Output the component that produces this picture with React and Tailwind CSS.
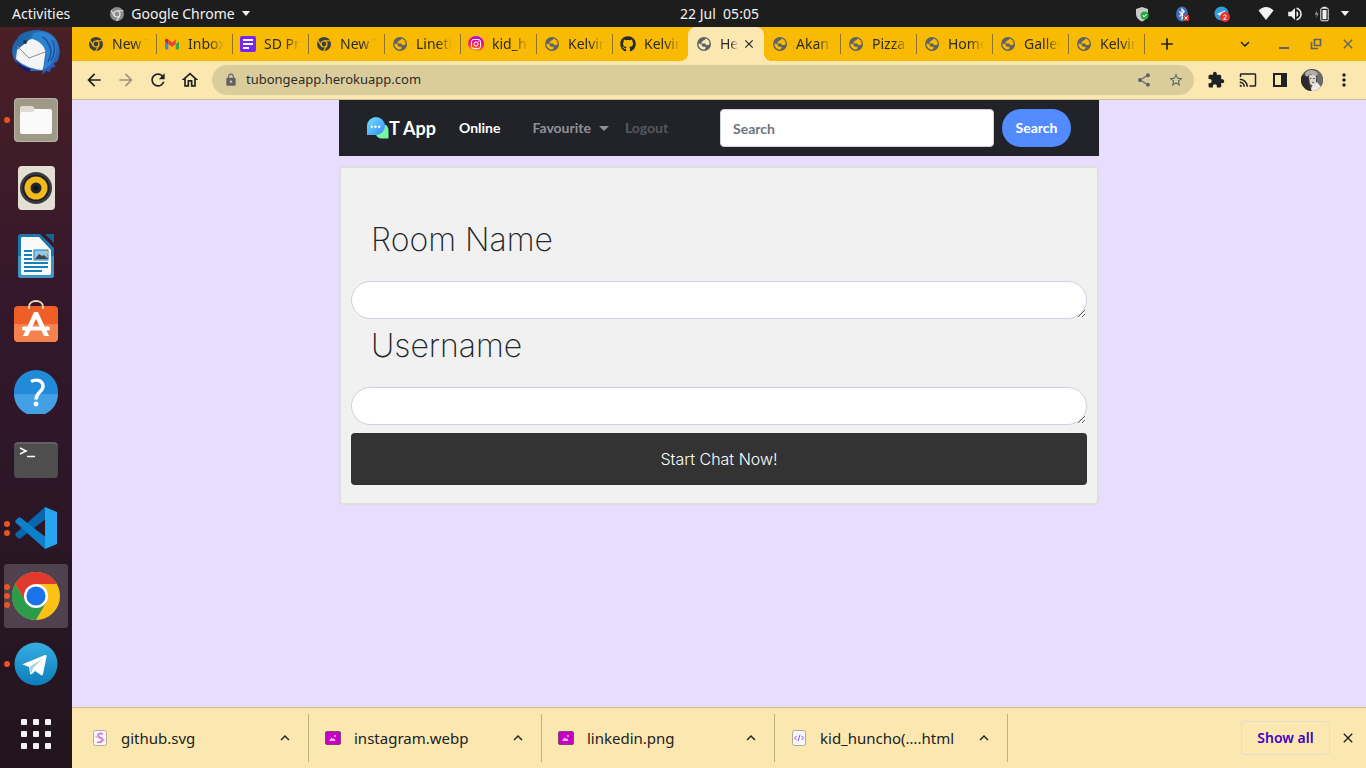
import React from "react";
import {
  MdArrowBack,
  MdArrowForward,
  MdRefresh,
  MdOutlineHome,
  MdLock,
  MdShare,
  MdStarBorder,
  MdExtension,
  MdCast,
  MdAdd,
  MdClose,
  MdMoreVert,
  MdVolumeUp,
  MdKeyboardArrowDown,
  MdKeyboardArrowUp,
} from "react-icons/md";
import { FaGithub } from "react-icons/fa";

/* ---------- favicons ---------- */

function Globe() {
  return (
    <svg viewBox="0 0 16 16" className="size-4 shrink-0" aria-hidden="true">
      <circle cx="8" cy="8" r="7" fill="#5f6368" />
      <path
        fill="currentColor"
        d="M9.500 2.600c-.2 1.300-1 1.800-2.200 1.900-.8.100-.6 1.300-1.400 1.700-.7.300-.8 1-.2 1.300H8.500c1 0 1.300.7 1.500 1.500h2.800l.8-1.500C13.500 5.200 12 3.300 9.500 2.600zM2.400 7.800c0 2.900 1.900 5 4.600 5.700 1.600.2 2.300-.3 2.200-1.300 0-.8.5-1 .9-1.500H7.500C6.300 10.700 6 10 5.900 9.200 5.700 8.300 4.500 7.800 2.400 7.800z"
      />
    </svg>
  );
}

function ChromeMono({ disc = "#3c4043", line = "#f9bb02" }) {
  return (
    <svg viewBox="0 0 16 16" className="size-4 shrink-0" aria-hidden="true">
      <circle cx="8" cy="8" r="7" fill={disc} />
      <circle cx="8" cy="8" r="3.600" fill={line} />
      <circle cx="8" cy="8" r="2.400" fill={disc} />
      <path d="M8 4.800h6.400M5.200 9.600L2 4.200M10.800 9.600L7.600 15" stroke={line} strokeWidth="1.100" />
    </svg>
  );
}

function Gmail() {
  return (
    <svg viewBox="0 0 16 16" className="size-4 shrink-0" aria-hidden="true">
      <path d="M1 4v8.500c0 .5.400 1 1 1h2.300V7z" fill="#4285f4" />
      <path d="M15 4v8.500c0 .5-.4 1-1 1h-2.300V7z" fill="#34a853" />
      <path d="M11.700 3.600V8L15 5.500V4.200c0-1.400-1.500-2-2.500-1.200z" fill="#fbbc04" />
      <path d="M1 5.500L4.300 8V3.600L3.500 3C2.500 2.200 1 2.800 1 4.200z" fill="#c5221f" />
      <path d="M4.300 3.600L8 6.400l3.700-2.800V8L8 10.700 4.300 8z" fill="#ea4335" />
    </svg>
  );
}

function Forms() {
  return (
    <svg viewBox="0 0 16 16" className="size-4 shrink-0" aria-hidden="true">
      <rect width="16" height="16" rx="2" fill="#7627f5" />
      <path d="M3 4h10M3 8h10M3 12h6" stroke="#fff" strokeWidth="1.800" />
    </svg>
  );
}

function Instagram() {
  return (
    <svg viewBox="0 0 16 16" className="size-4 shrink-0" aria-hidden="true">
      <defs>
        <linearGradient id="ig" x1=".4" y1="1" x2=".6" y2="0">
          <stop offset="0" stopColor="#ffd400" />
          <stop offset=".35" stopColor="#ff3a3a" />
          <stop offset=".65" stopColor="#f2078d" />
          <stop offset="1" stopColor="#a010f0" />
        </linearGradient>
      </defs>
      <circle cx="8" cy="8" r="8" fill="url(#ig)" />
      <rect x="3.500" y="3.500" width="9" height="9" rx="2.200" fill="none" stroke="#fff" />
      <circle cx="8" cy="8" r="2.100" fill="none" stroke="#fff" />
      <circle cx="10.700" cy="5.400" r=".6" fill="#fff" />
    </svg>
  );
}

const tabs = [
  { title: "New Tab", icon: <ChromeMono /> },
  { title: "Inbox (1)", icon: <Gmail /> },
  { title: "SD Prep", icon: <Forms /> },
  { title: "New Tab", icon: <ChromeMono /> },
  { title: "Lineth", icon: <Globe /> },
  { title: "kid_hun", icon: <Instagram /> },
  { title: "Kelvin", icon: <Globe /> },
  { title: "Kelvin", icon: <FaGithub className="size-4 shrink-0 text-[#24292f]" /> },
  { title: "Hello", icon: <Globe />, active: true },
  { title: "Akan N", icon: <Globe /> },
  { title: "Pizza P", icon: <Globe /> },
  { title: "Home", icon: <Globe /> },
  { title: "Gallery", icon: <Globe /> },
  { title: "Kelvin", icon: <Globe /> },
];

/* ---------- system bar ---------- */

function SystemBar() {
  return (
    <header className="grid h-[27px] shrink-0 grid-cols-[1fr_auto_1fr] items-center bg-[#1d1d1d] text-sm text-[#f2f2f2]">
      <div className="flex items-center pl-3">
        <button>Activities</button>
        <button className="ml-[39px] flex items-center">
          <ChromeMono disc="#8c8c8c" line="#e4e4e4" />
          <span className="ml-1.5">Google Chrome</span>
          <svg viewBox="0 0 10 6" className="ml-1.5 h-[5px] w-2.5" aria-hidden="true">
            <path d="M0 0h10L5 6z" fill="#f2f2f2" />
          </svg>
        </button>
      </div>
      <time className="pl-[73px] whitespace-pre">22 Jul  05:05</time>
      <div className="flex items-center justify-end pr-4">
        <svg viewBox="0 0 16 16" className="size-4" aria-label="Shield">
          <path d="M8 1l6 2v4.500c0 4-2.500 6.500-6 8-3.500-1.500-6-4-6-8V3z" fill="#c9cbc9" />
          <circle cx="10.600" cy="9.400" r="4" fill="#1eab42" />
          <path d="M8.800 9.400l1.300 1.400 2.400-2.500" stroke="#fff" strokeWidth="1.100" fill="none" />
        </svg>
        <svg viewBox="0 0 16 16" className="ml-6 size-4" aria-label="Bluetooth">
          <ellipse cx="8" cy="8" rx="6" ry="7.500" fill="#3d6fb5" />
          <path d="M5.300 5.500l5 5L8 13V3l2.300 2.500-5 5" stroke="#e9eef7" strokeWidth="1.200" fill="none" />
          <rect x="9" y="9" width="6" height="6" rx="1" fill="#e2322f" />
          <path d="M10.500 10.500l3 3m0-3l-3 3" stroke="#fff" />
        </svg>
        <svg viewBox="0 0 16 16" className="ml-6 size-4" aria-label="Telegram">
          <circle cx="7.500" cy="7.500" r="7" fill="#2b9fd9" />
          <path d="M3 8l8-3.500-1.500 7z" fill="#fff" />
          <circle cx="11" cy="11" r="5" fill="#e7332f" />
          <path d="M9.400 9.700c.4-1.300 3-1.100 2.700.5-.2.900-1.500 1.700-2.600 3h3.100" stroke="#fff" fill="none" />
        </svg>
        <svg viewBox="0 0 16 16" className="ml-7 size-4" aria-label="Wireless">
          <path d="M.5 4.500C5-.2 11-.2 15.500 4.500L8 14z" fill="#f2f2f2" />
        </svg>
        <MdVolumeUp className="ml-3 size-[18px]" />
        <svg viewBox="0 0 16 16" className="ml-2.5 size-4" aria-label="Battery">
          <path d="M3 4L1 8.500h2L2 12l2.500-4.500h-2z" fill="#bdbdbd" />
          <rect x="6.800" y="2.200" width="7.400" height="12.600" rx="1" fill="none" stroke="#f2f2f2" />
          <rect x="8.500" y="4" width="4" height="9.200" fill="#f2f2f2" />
          <path d="M8.500.8h4v1.400h-4z" fill="#f2f2f2" />
        </svg>
        <svg viewBox="0 0 10 6" className="ml-2.5 h-[5px] w-2.5" aria-hidden="true">
          <path d="M0 0h10L5 6z" fill="#f2f2f2" />
        </svg>
      </div>
    </header>
  );
}

/* ---------- dock ---------- */

const Thunderbird = () => (
  <svg viewBox="0 0 48 48" className="size-12" aria-hidden="true">
    <defs>
      <linearGradient id="tb" x1="0" y1="0" x2="1" y2="1">
        <stop offset="0" stopColor="#1b4f8e" />
        <stop offset=".5" stopColor="#2b7fd0" />
        <stop offset="1" stopColor="#2a4ba8" />
      </linearGradient>
    </defs>
    <path d="M17 3C27 0 40 3 45 13c4 9 3 16 0 21l-3 1 1 4-4 1-1 4-4-1-4 4 1-4H17C8 40 0 32 0 23c0-5 2-9 5-12 2-5 7-7 12-8z" fill="url(#tb)" />
    <path d="M5 22l11-10c8-3 14 1 18 8l-3 22c-8 0-20-4-27-11z" fill="#f4f4f4" />
    <path d="M5 18l12 12 16-6" fill="none" stroke="#8c9096" strokeWidth="1" />
    <path d="M4 32c4 5 9 7 15 9l-2 4C12 43 6 39 4 32z" fill="#251862" />
    <path d="M17 10c3-5 8-7 14-6 10 3 14 10 13 21-1 7-5 13-14 17 5-9 5-18 1-24-4-5-9-7-14-8z" fill="#2d83cf" />
    <path d="M35 14c5 5 5 12 1 20M40 12c4 7 3 14-1 21M30 9c5 2 7 6 8 11" stroke="#1d559e" strokeWidth="1.500" fill="none" />
    <path d="M8 15c1-6 7-9 13-8l-5 6-9 7z" fill="#1f65a8" />
    <circle cx="13" cy="14" r="2" fill="#17395f" />
  </svg>
);

const Files = () => (
  <svg viewBox="0 0 44 44" className="size-11" aria-hidden="true">
    <rect width="44" height="44" rx="4" fill="#9f9987" />
    <rect x=".5" y=".5" width="43" height="43" rx="4" fill="none" stroke="#b9b5a6" />
    <path d="M6 10c0-1 1-2 2-2h10c2 0 2 3 4 3v6H6z" fill="#dedbd0" />
    <path d="M6 16c0-1 1-2 2-2h10c2 0 2-3 4-3h14c1 0 2 1 2 2v21c0 1-1 2-2 2H8c-1 0-2-1-2-2z" fill="#fafafa" />
  </svg>
);

const Rhythmbox = () => (
  <svg viewBox="0 0 44 46" className="h-[46px] w-11" aria-hidden="true">
    <rect x="4" y="1" width="37" height="44" rx="4" fill="#e3dfd4" />
    <circle cx="22" cy="23" r="16" fill="#3b3b40" />
    <circle cx="22" cy="23" r="13.500" fill="#1d1f26" />
    <circle cx="22" cy="23" r="11.500" fill="#f2bb1d" />
    <circle cx="22" cy="23" r="5.500" fill="#22262e" />
    <circle cx="22" cy="23" r="2.500" fill="#0e1117" />
  </svg>
);

const Writer = () => (
  <svg viewBox="0 0 44 46" className="h-[46px] w-11" aria-hidden="true">
    <path d="M7 1h19l14 14v27c0 2-1 3-3 3H7c-2 0-3-1-3-3V4c0-2 1-3 3-3z" fill="#1b77ad" />
    <path d="M4 23h36v19c0 2-1 3-3 3H7c-2 0-3-1-3-3z" fill="#3b96c6" />
    <path d="M8 4h17l12 13v23c0 1-1 2-2 2H9c-1 0-2-1-2-2V5z" fill="#fafafa" />
    <path d="M31 1h9v9z" fill="#11669b" />
    <path d="M10 18h8M10 22h8M10 26h8M10 30h24M10 34h24M10 38h18" stroke="#1681b8" strokeWidth="1.800" />
    <rect x="20" y="17" width="14" height="10" fill="#92c9ea" stroke="#1681b8" />
    <path d="M21 26l4-5 3 2 2-1 4 4z" fill="#454545" />
    <path d="M30 18h4v3z" fill="#f9b826" />
  </svg>
);

const Software = () => (
  <svg viewBox="0 0 44 48" className="h-12 w-11" aria-hidden="true">
    <rect y="6" width="44" height="36" rx="4" fill="#ef5f25" />
    <path d="M0 24h44v14c0 2-2 4-4 4H4c-2 0-4-2-4-4z" fill="#f4814e" />
    <path d="M15 9V7c0-8 14-8 14 0v2" fill="none" stroke="#f6d9b4" strokeWidth="2" />
    <path d="M20 12h4l11 24h-5l-8-17-8 17H9z" fill="#fff" />
    <path d="M10 28.500h24" stroke="#fff" strokeWidth="4" strokeLinecap="round" />
  </svg>
);

const Help = () => (
  <svg viewBox="0 0 44 44" className="size-11" aria-hidden="true">
    <circle cx="22" cy="22" r="22" fill="#218ad9" />
    <path d="M0 24h44a22 22 0 0 1-44 0z" fill="#43a0e4" />
    <path d="M17 11.500c6-3 12-1 12 5 0 5-7 6-7 13" fill="none" stroke="#fff" strokeWidth="3.400" />
    <circle cx="22" cy="34" r="2.400" fill="#fff" />
  </svg>
);

const Terminal = () => (
  <svg viewBox="0 0 44 36" className="h-9 w-11" aria-hidden="true">
    <rect width="44" height="36" rx="4" fill="#4e4e4e" />
    <path d="M1 3q1-2 3-2h36q2 0 3 2" fill="none" stroke="#777" />
    <path d="M6 6l6 3-6 3M13 14.500h8" fill="none" stroke="#fff" strokeWidth="1.600" />
  </svg>
);

const VSCode = () => (
  <svg viewBox="0 0 44 44" className="size-11" aria-hidden="true">
    <path d="M31 1L2 27c-1 1-1 2 0 3l2 2c1 1 2 1 3 0l26-20z" fill="#0767ac" />
    <path d="M31 43L2 17c-1-1-1-2 0-3l2-2c1-1 2-1 3 0l26 20z" fill="#0e7fc9" />
    <path d="M31 1l12 5v32l-12 5z" fill="#27a4ef" />
  </svg>
);

const Chrome = () => (
  <svg viewBox="0 0 48 48" className="size-12" aria-hidden="true">
    <circle cx="24" cy="24" r="24" fill="#fcc117" />
    <path d="M3.200 12A24 24 0 0 1 44.800 12H24L13.600 30z" fill="#e0392e" />
    <path d="M3.200 12A24 24 0 0 0 24 48l10.400-18H13.600z" fill="#2a9c4a" />
    <circle cx="24" cy="24" r="12" fill="#fff" />
    <circle cx="24" cy="24" r="9.600" fill="#1a73e8" />
  </svg>
);

const Telegram = () => (
  <svg viewBox="0 0 44 44" className="size-11" aria-hidden="true">
    <defs>
      <linearGradient id="tg" x2="0" y2="1">
        <stop offset="0" stopColor="#37aee2" />
        <stop offset="1" stopColor="#0c7cb8" />
      </linearGradient>
    </defs>
    <circle cx="22" cy="22" r="21.500" fill="url(#tg)" />
    <path d="M9 22L31 13c1 0 2 0 1.500 2L29 32c0 1-1 2-2 1l-6-4-3 3c-1 1-2 0-2-1l-1-6-5-2c-1 0-2-1-1-1z" fill="#fff" />
    <path d="M15.500 25L28 17l-9 9-2 6z" fill="#a5cfe6" />
  </svg>
);

const AppGrid = () => (
  <svg viewBox="0 0 30 30" className="size-[30px]" fill="#f2f2f2" aria-hidden="true">
    {[0, 12, 24].map((y) =>
      [0, 12, 24].map((x) => <rect key={`${x}-${y}`} x={x} y={y} width="6" height="6" rx="1" />)
    )}
  </svg>
);

const dockApps = [
  { name: "Thunderbird", icon: <Thunderbird />, windows: 0 },
  { name: "Files", icon: <Files />, windows: 1 },
  { name: "Rhythmbox", icon: <Rhythmbox />, windows: 0 },
  { name: "LibreOffice Writer", icon: <Writer />, windows: 0 },
  { name: "Ubuntu Software", icon: <Software />, windows: 0 },
  { name: "Help", icon: <Help />, windows: 0 },
  { name: "Terminal", icon: <Terminal />, windows: 0 },
  { name: "Visual Studio Code", icon: <VSCode />, windows: 2 },
  { name: "Google Chrome", icon: <Chrome />, windows: 3, focused: true },
  { name: "Telegram", icon: <Telegram />, windows: 1 },
  { name: "Show Applications", icon: <AppGrid />, windows: 0 },
];

function Dock() {
  return (
    <nav
      aria-label="Dock"
      className="flex w-[72px] shrink-0 flex-col items-center justify-end gap-1 overflow-hidden bg-linear-to-b from-[#4a1f25] via-[#32172b] via-40% to-[#22151f] pb-0.5"
    >
      {dockApps.map((app) => (
        <button
          key={app.name}
          aria-label={app.name}
          className={`relative flex size-16 shrink-0 items-center justify-center rounded-[3px] last:mt-0.5 ${
            app.focused ? "bg-[#50414f]" : ""
          }`}
        >
          {app.icon}
          <span className="absolute inset-y-0 left-0 flex flex-col justify-center gap-[3px]">
            {Array.from({ length: app.windows }, (_, i) => (
              <i key={i} className="size-1.5 rounded-full bg-[#e95420]" />
            ))}
          </span>
        </button>
      ))}
    </nav>
  );
}

/* ---------- browser chrome ---------- */

function Tab({ tab, divider }) {
  return (
    <div
      role="tab"
      aria-selected={!!tab.active}
      className={`relative flex h-full w-[76px] shrink items-center pr-2 pl-2 ${
        tab.active ? "rounded-t-lg bg-[#fbe8b0] text-[#fbe8b0]" : "text-[#f9bb02]"
      }`}
    >
      {tab.active && (
        <>
          <span className="absolute bottom-0 -left-2 size-2 bg-[radial-gradient(circle_at_top_left,transparent_8px,#fbe8b0_8px)]" />
          <span className="absolute -right-2 bottom-0 size-2 bg-[radial-gradient(circle_at_top_right,transparent_8px,#fbe8b0_8px)]" />
        </>
      )}
      {tab.icon}
      <span className="ml-2 min-w-0 flex-1 overflow-hidden text-sm whitespace-nowrap text-[#2b2b2b] [mask-image:linear-gradient(to_right,black_60%,transparent)]">
        {tab.title}
      </span>
      {tab.active && (
        <button aria-label="Close tab" className="ml-1 text-[#202124]">
          <MdClose className="size-3.5" />
        </button>
      )}
      {divider && <span className="absolute right-0 h-5 w-px translate-x-px bg-[#8d7431]" />}
    </div>
  );
}

function TabStrip() {
  return (
    <div className="flex h-[34px] shrink-0 items-center bg-[#f9bb02] pr-0.5 pl-2 text-[#202124]">
      <div role="tablist" className="flex h-full min-w-0">
        {tabs.map((tab, i) => (
          <Tab key={i} tab={tab} divider={!tab.active && !tabs[i + 1]?.active} />
        ))}
      </div>
      <button aria-label="New tab" className="ml-[13px]">
        <MdAdd className="size-5" />
      </button>
      <div className="ml-auto flex items-center text-[#5f6368]">
        <button aria-label="Search tabs" className="mr-3.5 text-[#202124]">
          <MdKeyboardArrowDown className="size-[18px]" />
        </button>
        <button aria-label="Minimize" className="flex h-4 w-8 items-end justify-center pb-[3px]">
          <span className="h-0.5 w-2.5 bg-[#5f6368]" />
        </button>
        <button aria-label="Restore" className="flex w-8 justify-center">
          <svg viewBox="0 0 12 12" className="size-3" fill="none" stroke="currentColor" strokeWidth="1.700">
            <path d="M4.500 1.500h6v6h-6zM1.500 4v6.500H8" />
          </svg>
        </button>
        <button aria-label="Close" className="flex w-8 justify-center">
          <MdClose className="size-4" />
        </button>
      </div>
    </div>
  );
}

function Toolbar() {
  return (
    <div className="flex h-[39px] shrink-0 items-center border-b border-[#cdbf93] bg-[#fbe8b0] pr-3 pl-3 text-[#202124]">
      <div className="flex gap-3">
        <button aria-label="Back">
          <MdArrowBack className="size-5" />
        </button>
        <button aria-label="Forward" className="text-[#a0977a]">
          <MdArrowForward className="size-5" />
        </button>
        <button aria-label="Reload">
          <MdRefresh className="size-5" />
        </button>
        <button aria-label="Home">
          <MdOutlineHome className="size-5" />
        </button>
      </div>
      <div className="mx-3 flex h-[30px] flex-1 items-center rounded-full bg-[#dbcd9b] pr-2.5 pl-3 text-[#5f6368]">
        <MdLock className="size-3.5 shrink-0" />
        <input
          aria-label="Address"
          defaultValue="tubongeapp.herokuapp.com"
          className="mx-2 min-w-0 flex-1 bg-transparent text-[13px] text-[#2b2b2b] outline-none"
        />
        <button aria-label="Share">
          <MdShare className="size-4" />
        </button>
        <button aria-label="Bookmark" className="ml-4">
          <MdStarBorder className="size-4" />
        </button>
      </div>
      <div className="flex items-center gap-3">
        <button aria-label="Extensions" className="flex w-5 justify-center">
          <MdExtension className="size-[18px] shrink-0" />
        </button>
        <button aria-label="Cast" className="flex w-5 justify-center">
          <MdCast className="size-[18px] shrink-0" />
        </button>
        <button aria-label="Side panel" className="flex w-5 justify-center">
          <svg viewBox="0 0 16 16" className="size-4">
            <path d="M1 1h14v14H1zM3 3v10h6V3z" fill="currentColor" fillRule="evenodd" />
          </svg>
        </button>
        <button aria-label="Profile" className="flex w-5 justify-center">
          <svg viewBox="0 0 22 22" className="size-[22px] shrink-0">
            <defs>
              <clipPath id="avatar">
                <circle cx="11" cy="11" r="11" />
              </clipPath>
            </defs>
            <g clipPath="url(#avatar)">
              <path d="M0 0h22v22H0z" fill="#4b4948" />
              <path d="M15 0h8v22h-6z" fill="#6e6a67" />
              <path d="M4 4c3-4 11-4 13 1l-2 2-5-2-5 3z" fill="#b0adaa" />
              <path d="M8 7c2-2 6-2 7 1v6l-3 3-3-2z" fill="#d8d4d1" />
              <path d="M10 19l2-3 4-3 4 5-4 5h-5z" fill="#ece9e6" />
              <path d="M9 9.500h1.500M12 9.500h2M11 13.500h2" stroke="#6b6866" />
              <path d="M0 6l7 2 1 6 2 8H0z" fill="#2b2929" />
            </g>
          </svg>
        </button>
        <button aria-label="Menu" className="flex w-5 justify-center">
          <MdMoreVert className="size-5 shrink-0" />
        </button>
      </div>
    </div>
  );
}

/* ---------- page ---------- */

function ChatLogo() {
  return (
    <svg viewBox="0 0 22 22" className="size-[22px]" aria-hidden="true">
      <defs>
        <linearGradient id="bubble" x1="0" y1="0" x2="1" y2="1">
          <stop offset="0" stopColor="#6be8fb" />
          <stop offset="1" stopColor="#3a86fc" />
        </linearGradient>
      </defs>
      <path d="M21.500 21.500H15a7 7 0 0 1-6.500-5L18 7.500a7 7 0 0 1 3.500 6z" fill="#79f5a6" />
      <path d="M0 18V9a9 9 0 1 1 9 9z" fill="url(#bubble)" />
      <circle cx="4.800" cy="9.800" r="1.200" fill="#fff" />
      <circle cx="8.500" cy="9.800" r="1.200" fill="#fff" />
      <circle cx="12.200" cy="9.800" r="1.200" fill="#fff" />
    </svg>
  );
}

function NavBar() {
  return (
    <nav className="flex h-14 items-center bg-[#222329] px-7 font-['Lato',sans-serif] text-sm font-bold">
      <a href="#home" className="flex items-center text-lg text-white">
        <ChatLogo />T App
      </a>
      <a href="#online" className="ml-[23px] text-white">
        Online
      </a>
      <a href="#favourite" className="ml-8 flex items-center text-[#919194]">
        Favourite
        <svg viewBox="0 0 10 5" className="ml-2 h-[5px] w-2.5" aria-hidden="true">
          <path d="M0 0h10L5 5z" fill="currentColor" />
        </svg>
      </a>
      <a href="#logout" className="ml-4 text-[#56575c]">
        Logout
      </a>
      <form className="ml-auto flex gap-2" onSubmit={(e) => e.preventDefault()}>
        <input
          type="search"
          aria-label="Search"
          placeholder="Search"
          className="h-[38px] w-[274px] rounded border border-[#cfcfdd] bg-white px-3 outline-none placeholder:text-[#6f7580]"
        />
        <button className="h-[38px] w-[69px] rounded-full bg-[#528bff] text-white">Search</button>
      </form>
    </nav>
  );
}

function Field({ id, label }) {
  return (
    <div>
      <label
        htmlFor={id}
        className="block px-5 pt-2 pb-[22px] text-[32px] leading-[38px] font-extralight text-[#212529]"
      >
        {label}
      </label>
      <textarea
        id={id}
        rows={1}
        className="block h-[38px] w-full rounded-[20px] border border-[#cfcfdd] bg-white px-3 py-1.5 text-base outline-none"
      />
    </div>
  );
}

function ChatPage() {
  return (
    <main className="min-h-0 flex-1 overflow-hidden bg-[#e8ddff]">
      <div className="mx-auto max-w-[760px]">
        <NavBar />
        <form
          onSubmit={(e) => e.preventDefault()}
          className="mt-2.5 rounded border-2 border-[#dedede] bg-[#f1f1f1] px-2.5 pt-[45px] pb-[18px] font-['Inter',sans-serif]"
        >
          <Field id="room" label="Room Name" />
          <Field id="username" label="Username" />
          <button className="mt-2 h-[52px] w-full rounded bg-[#333333] text-base font-light text-white">
            Start Chat Now!
          </button>
        </form>
      </div>
    </main>
  );
}

/* ---------- downloads ---------- */

const ImageFile = () => (
  <svg viewBox="0 0 16 16" className="size-4" aria-hidden="true">
    <rect x=".5" y="1.500" width="15" height="13" rx="1.500" fill="#c400c4" stroke="#8a3f72" />
    <path d="M4 11l2.500-3.500L8 9l1-1 1.500 3z" fill="#f3b4f3" />
    <circle cx="10" cy="6" r="1" fill="#f3b4f3" />
  </svg>
);

const PageFile = ({ children }) => (
  <svg viewBox="0 0 16 16" className="size-4" aria-hidden="true">
    <rect x="1.500" y=".5" width="13" height="15" rx="2" fill="#f8f6fb" stroke="#b5aa94" />
    {children}
  </svg>
);

const downloads = [
  {
    name: "github.svg",
    icon: (
      <PageFile>
        <path d="M11 4C7 2.500 4.500 5 7 7s5 2 3 4-5 1-5 1" fill="none" stroke="#c77be8" strokeWidth="1.800" />
        <path d="M3.500 6.500l2 1M10 10.500l2.500-1" stroke="#f08a5a" />
      </PageFile>
    ),
  },
  { name: "instagram.webp", icon: <ImageFile /> },
  { name: "linkedin.png", icon: <ImageFile /> },
  {
    name: "kid_huncho(….html",
    icon: (
      <PageFile>
        <path d="M5.500 6L3.500 8l2 2M10.500 6l2 2-2 2M9 5l-2 6" fill="none" stroke="#7a5cf0" />
      </PageFile>
    ),
  },
];

function DownloadBar() {
  return (
    <footer className="flex h-[61px] shrink-0 items-center border-t border-[#cdbf93] bg-[#fbe8b0] pr-2.5 pl-1 text-[#202124]">
      {downloads.map((file) => (
        <div key={file.name} className="flex h-12 w-[233px] items-center border-r border-[#bfb083] pr-3.5 pl-4">
          {file.icon}
          <span className="ml-[13px] text-[15px]">{file.name}</span>
          <button aria-label={`Options for ${file.name}`} className="ml-auto">
            <MdKeyboardArrowUp className="size-[18px]" />
          </button>
        </div>
      ))}
      <button className="ml-auto h-[34px] w-[89px] rounded border border-[#dfdcd0] text-sm font-semibold text-[#4500c4]">
        Show all
      </button>
      <button aria-label="Close downloads bar" className="ml-2.5">
        <MdClose className="size-4" />
      </button>
    </footer>
  );
}

export default function App() {
  return (
    <div className="flex h-screen flex-col font-['Noto_Sans',sans-serif]">
      <SystemBar />
      <div className="flex min-h-0 flex-1">
        <Dock />
        <div className="flex min-w-0 flex-1 flex-col">
          <TabStrip />
          <Toolbar />
          <ChatPage />
          <DownloadBar />
        </div>
      </div>
    </div>
  );
}
